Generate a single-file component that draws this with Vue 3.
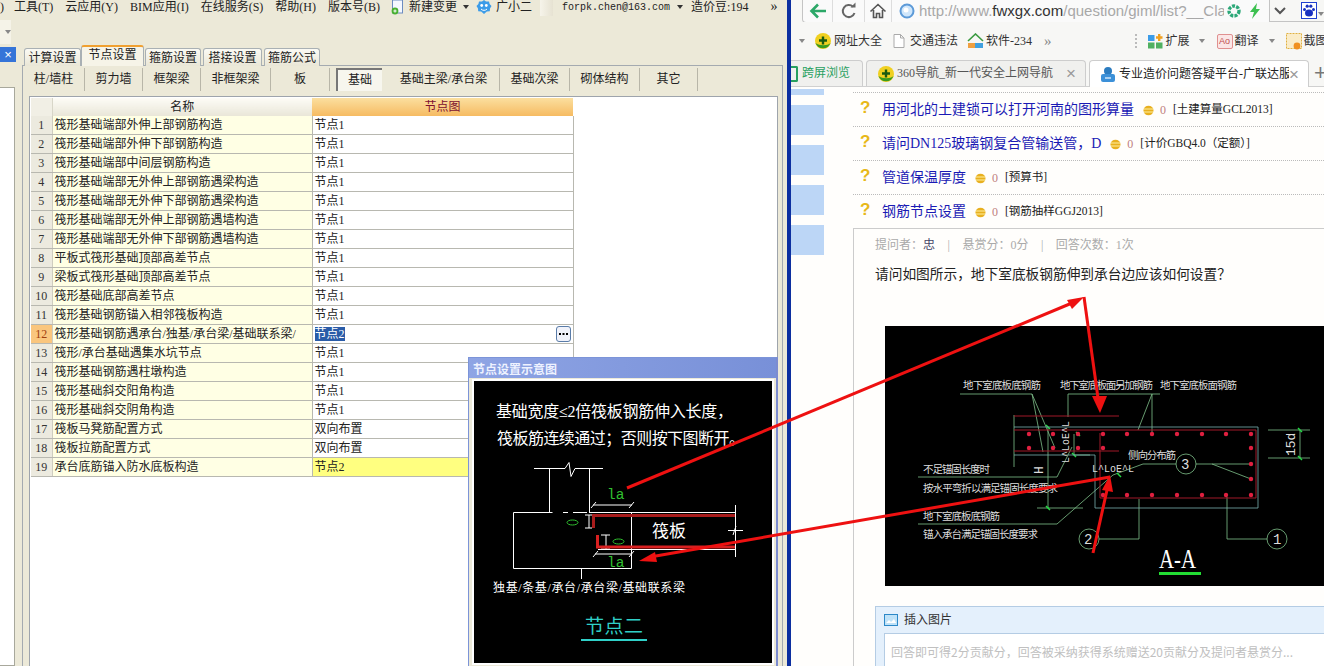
<template>
  <div class="desk">
    <section class="app">
      <header class="menu">
        <span class="menu-cut">)</span>
        <span v-for="m in menus" :key="m" class="menu-item">{{ m }}</span>
        <svg class="mi-doc" width="15" height="16" viewBox="0 0 15 16">
          <rect x="1.5" y="1" width="10" height="13" fill="#f4f8ff" stroke="#6c8cc0" />
          <circle cx="4" cy="12" r="3.4" fill="#48b030" />
          <path d="M2.4 12h3.2M4 10.4v3.2" stroke="#fff" />
        </svg>
        <span class="mi-change">新建变更</span>
        <span class="caret mi-caret1"></span>
        <svg class="mi-face" width="16" height="16" viewBox="0 0 16 16">
          <path d="M8 1l2 1.6 3-.2.6 2.6 1.9 2-1.5 2.4-.2 2.8-3 .4L8 15l-2.800-2.400-3-.4-.2-2.800L.5 7l1.900-2 .6-2.600 3 .2z" fill="#3c9ce8" />
          <circle cx="5.700" cy="6.500" r="1.400" fill="#fff" />
          <circle cx="10.300" cy="6.500" r="1.400" fill="#fff" />
          <path d="M5 10c1.500 1.800 4.500 1.800 6 0" stroke="#fff" fill="none" />
        </svg>
        <span class="mi-name">广小二</span>
        <span class="mi-fade"></span>
        <span class="mi-mail">forpk.chen@163.com</span>
        <span class="caret mi-caret2"></span>
        <span class="mi-bean">造价豆:194</span>
        <span class="mi-more">»</span>
      </header>

      <div class="app-body">
        <aside class="side">
          <div class="side-combo"><span class="caret caret-grey"></span></div>
          <div class="side-close">×</div>
          <div class="side-list"></div>
        </aside>

        <main class="work">
          <nav class="tabs">
            <span
              v-for="t in topTabs"
              :key="t.label"
              class="tab"
              :class="{ 'tab-on': t.on }"
              :style="{ width: t.w + 'px' }"
            >{{ t.label }}</span>
          </nav>

          <div class="panel">
            <div class="subtabs">
              <span
                v-for="s in subTabs"
                :key="s.label"
                class="subtab"
                :class="{ 'subtab-on': s.on }"
                :style="{ width: s.w + 'px' }"
              >{{ s.label }}</span>
            </div>

            <div class="grid-box">
              <table class="grid">
                <colgroup>
                  <col class="c-num" />
                  <col class="c-name" />
                  <col class="c-node" />
                </colgroup>
                <thead>
                  <tr>
                    <th class="th-blank"></th>
                    <th class="th-name">名称</th>
                    <th class="th-node">节点图</th>
                  </tr>
                </thead>
                <tbody>
                  <tr v-for="(r, i) in rows" :key="i">
                    <td class="num" :class="{ 'num-on': i === 11 }">{{ i + 1 }}</td>
                    <td class="name">{{ r[0] }}</td>
                    <td class="node" :class="{ 'node-flag': i === 18 }">
                      <span :class="{ 'node-sel': i === 11 }">{{ r[1] }}</span>
                      <span v-if="i === 11" class="dots">
                        <svg width="9" height="3" viewBox="0 0 9 3"><path d="M0 0h2v2H0zM3.500 0h2v2h-2zM7 0h2v2H7z" fill="#000" /></svg>
                      </span>
                    </td>
                  </tr>
                </tbody>
              </table>
            </div>
          </div>
        </main>
      </div>
    </section>

    <div class="divider"></div>

    <section class="browser">
      <div class="toolbar">
        <div class="nav-box">
          <span class="nav-btn nb-back">
            <svg width="20" height="18" viewBox="0 0 20 18"><path d="M18 9H4M10 2.500L3.500 9l6.500 6.500" fill="none" stroke="#2ca868" stroke-width="2.600" /></svg>
          </span>
          <span class="nav-btn nb-reload">
            <svg width="18" height="18" viewBox="0 0 18 18"><path d="M14.500 11A6 6 0 1 1 13 4.800" fill="none" stroke="#666" stroke-width="2" /><path d="M10.500 5.500h5v-5z" fill="#666" /></svg>
          </span>
          <span class="nav-btn nb-home">
            <svg width="18" height="18" viewBox="0 0 18 18"><path d="M1.500 9.500L9 2.500l7.500 7M4.500 8v7.500h3v-4h3v4h3V8" fill="none" stroke="#555" stroke-width="1.600" /></svg>
          </span>
          <div class="url">
            <svg width="16" height="16" viewBox="0 0 16 16"><circle cx="8" cy="8" r="6.500" fill="#cfe6fb" stroke="#5c9ad8" stroke-width="2" /><circle cx="7" cy="7" r="2.500" fill="#fff" /></svg>
            <span class="url-text"><span class="url-dim">http://www.</span><b>fwxgx.com</b><span class="url-dim">/question/giml/list?__Cla</span></span>
            <svg class="url-ok" width="16" height="16" viewBox="0 0 16 16"><circle cx="8" cy="8" r="5" fill="none" stroke="#2ca878" stroke-width="3.400" stroke-dasharray="3 1.200" /></svg>
            <svg class="url-bolt" width="14" height="18" viewBox="0 0 14 18"><path d="M9 1L2 10h4l-2 7 8-10H8z" fill="#3cc050" /></svg>
          </div>
        </div>
        <div class="tool-rest">
          <svg class="chev" width="14" height="10" viewBox="0 0 14 10"><path d="M2 2l5 5 5-5" fill="none" stroke="#555" stroke-width="2" /></svg>
          <svg class="paw" width="16" height="17" viewBox="0 0 16 17">
            <rect x=".5" y=".5" width="15" height="16" fill="#fff" stroke="#2040d0" />
            <ellipse cx="8" cy="11" rx="4" ry="3.500" fill="#1830c0" />
            <circle cx="3.500" cy="7.500" r="1.500" fill="#1830c0" /><circle cx="6.200" cy="4.200" r="1.600" fill="#1830c0" />
            <circle cx="9.800" cy="4.200" r="1.600" fill="#1830c0" /><circle cx="12.500" cy="7.500" r="1.500" fill="#1830c0" />
          </svg>
          <span class="caret caret-grey caret-sm"></span>
        </div>
      </div>

      <div class="bookmarks">
        <span class="caret caret-grey bm-caret"></span>
        <svg class="ico-360" width="18" height="18" viewBox="0 0 18 18"><circle cx="9" cy="9" r="8" fill="#f0d020" /><path d="M1.500 11a8 8 0 0 0 15 0c-3 3-11 3-15 0z" fill="#3a9a20" /><path d="M5 8.500h8M9 4.500v8" stroke="#1a5a10" stroke-width="2.400" /></svg>
        <span class="bm bm-a">网址大全</span>
        <svg class="bm-doc" width="12" height="14" viewBox="0 0 12 14"><path d="M1 .5h6.500L11 4v9.500H1z M7.500 .5V4H11" fill="#fff" stroke="#aaa" /></svg>
        <span class="bm bm-b">交通违法</span>
        <svg class="bm-2345" width="17" height="16" viewBox="0 0 17 16"><path d="M1 8l7.500-7L16 8" fill="none" stroke="#3a9a40" stroke-width="1.600" /><rect x="1" y="10" width="15" height="5" fill="#f0a040" /><rect x="8" y="10" width="8" height="5" fill="#40a0e0" /></svg>
        <span class="bm bm-c">软件-234</span>
        <span class="bm-more">»</span>
        <span class="bm-grip"></span>
        <svg class="bm-ext" width="15" height="15" viewBox="0 0 15 15"><rect x="0" y="1" width="6.500" height="6" fill="#3c9ce8" /><rect x="0" y="8.500" width="6.500" height="6" fill="#50b060" /><rect x="8" y="8.500" width="6.500" height="6" fill="#50b060" /><path d="M8 3.500h6.500M11.200 0v7" stroke="#f0a020" stroke-width="2.400" /></svg>
        <span class="bm bm-d">扩展</span>
        <span class="caret caret-grey bm-caret2"></span>
        <span class="bm-ao">Ao</span>
        <span class="bm bm-e">翻译</span>
        <span class="caret caret-grey bm-caret3"></span>
        <svg class="bm-shot" width="17" height="17" viewBox="0 0 17 17"><rect x=".5" y=".5" width="15" height="15" fill="#faecc8" stroke="#e0b040" stroke-dasharray="2 1" /><circle cx="11" cy="13" r="3.400" fill="#f09020" /></svg>
        <span class="bm bm-f">截图</span>
      </div>

      <div class="strip">
        <div class="b-tab b-tab-side">
          <span class="side-box"></span>
          <span class="side-label">跨屏浏览</span>
        </div>
        <div class="b-tab b-tab-mid">
          <svg width="18" height="18" viewBox="0 0 18 18"><circle cx="9" cy="9" r="8" fill="#f0d020" /><path d="M1.500 11a8 8 0 0 0 15 0c-3 3-11 3-15 0z" fill="#3a9a20" /><path d="M5 8.500h8M9 4.500v8" stroke="#1a5a10" stroke-width="2.400" /></svg>
          <span class="b-title">360导航_新一代安全上网导航</span>
          <span class="b-x">×</span>
        </div>
        <div class="b-tab b-tab-on">
          <svg width="16" height="17" viewBox="0 0 16 17"><circle cx="8" cy="5" r="4" fill="#2c7cc0" /><rect x="1" y="8" width="14" height="8" rx="2" fill="#3c90d8" /><path d="M5 12h6" stroke="#cfe6fb" stroke-width="1.500" /></svg>
          <span class="b-title b-title-on">专业造价问题答疑平台-广联达服</span>
          <span class="b-x b-x-on">×</span>
        </div>
        <span class="b-plus">+</span>
      </div>

      <div class="content">
        <div class="blocks">
          <span class="block block-cut"></span>
          <span v-for="n in 4" :key="n" class="block"></span>
        </div>
        <div class="content-main">
          <div v-for="q in questions" :key="q.title" class="q-row">
            <span class="q-mark">?</span>
            <a class="q-title">{{ q.title }}</a>
            <svg class="coin" width="11" height="11" viewBox="0 0 11 11"><ellipse cx="5.500" cy="5.500" rx="5" ry="4.800" fill="#e8b020" /><path d="M1 4h9M1 7h9" stroke="#fff0a0" /></svg>
            <span class="q-zero">0</span>
            <span class="q-cat">{{ q.cat }}</span>
          </div>

          <div class="q-panel">
            <div class="q-meta">
              <span>提问者：<em>忠</em></span><i>|</i><span>悬赏分：0分</span><i>|</i><span>回答次数：1次</span>
            </div>
            <p class="q-text">请问如图所示，地下室底板钢筋伸到承台边应该如何设置？</p>

            <svg class="cad" width="439" height="260" viewBox="885 326 439 260">
              <rect x="885" y="326" width="439" height="260" fill="#000" />
              <g fill="none" stroke="#7fc08a" stroke-width=".8">
                <path d="M960 394h72M1032 394l11 58M1032 394l23 54M1068 417v-23h72M1152 394l-14 36M1152 394v39M1160 394h-20" />
                <path d="M918 477h139l15-30M918 524h139l56-49M1176 464h-33l-30 11M1196 464h16l39 15M1212 464h39" />
                <path d="M1099 539h40v-40M1267 539h-40v-42M1268 430h42M1268 458h42M1300 430v28" />
                <path d="M1014 415v52M1048 427v81M1037 508h46M1074 434v21M1074 455h16" />
                <circle cx="1186" cy="464" r="10" /><circle cx="1089" cy="539" r="10" /><circle cx="1277" cy="539" r="10" />
              </g>
              <g stroke="#22dd44" stroke-width="1.500">
                <path v-for="t in cadTicks" :key="t[0] + '-' + t[1]" :d="`M${t[0] - 2} ${t[1] - 2}l4 4`" />
              </g>
              <path d="M1014 427h244v81h-163v-53h-81" fill="none" stroke="#7ab0b0" stroke-width=".8" />
              <g fill="none" stroke="#a01828" stroke-width="1">
                <path d="M1014 416h105M1014 430h242v68h-156v-65M1014 451h105" />
              </g>
              <g fill="#e02040">
                <circle v-for="d in cadDots" :key="d[0] + '-' + d[1]" :cx="d[0]" :cy="d[1]" r="2.200" />
              </g>
              <g class="cad-label">
                <text x="963" y="389" textLength="78">地下室底板底钢筋</text>
                <text x="1060" y="389" textLength="93">地下室底板面另加钢筋</text>
                <text x="1160" y="389" textLength="77">地下室底板面钢筋</text>
                <text x="1128" y="459" textLength="48">侧向分布筋</text>
                <text x="923" y="473" textLength="67">不足锚固长度时</text>
                <text x="923" y="492" textLength="135">按水平弯折以满足锚固长度要求</text>
                <text x="923" y="520" textLength="77">地下室底板底钢筋</text>
                <text x="923" y="538" textLength="115">锚入承台满足锚固长度要求</text>
              </g>
              <g class="cad-latin">
                <text x="1181" y="469" font-size="14">3</text>
                <text x="1084" y="544" font-size="14">2</text>
                <text x="1273" y="544" font-size="14">1</text>
                <text x="1092" y="472" font-size="10">L^LoE^L</text>
                <text transform="translate(1069 463) rotate(-90)" font-size="10">L^LoE^L</text>
                <text transform="translate(1043 474) rotate(-90)" font-size="13">H</text>
                <text transform="translate(1295 456) rotate(-90)" font-size="13">15d</text>
              </g>
              <text class="cad-title" x="1159" y="568" textLength="37" lengthAdjust="spacingAndGlyphs">A-A</text>
              <rect x="1159" y="572" width="42" height="3" fill="#22dd33" />
            </svg>

            <div class="answer">
              <div class="answer-head">
                <svg width="14" height="12" viewBox="0 0 14 12"><rect x=".5" y=".5" width="13" height="11" fill="#bfe2f8" stroke="#2c88c8" /><path d="M2 9l3-3 2 2 3-3 2 4z" fill="#fff" /></svg>
                <span>插入图片</span>
              </div>
              <div class="answer-box">回答即可得2分贡献分，回答被采纳获得系统赠送20贡献分及提问者悬赏分...</div>
            </div>
          </div>
        </div>
      </div>
    </section>

    <div class="popup">
      <div class="popup-title">节点设置示意图</div>
      <svg class="popup-draw" width="298" height="282" viewBox="474 381 298 282">
        <rect x="474" y="381" width="298" height="282" fill="#000" />
        <g class="draw-text">
          <text x="496" y="417" font-size="16" textLength="237">基础宽度≤2倍筏板钢筋伸入长度，</text>
          <text x="497" y="444" font-size="16" textLength="248">筏板筋连续通过；否则按下图断开。</text>
          <text x="652" y="537" font-size="17">筏板</text>
          <text x="493" y="592" font-size="12" textLength="192">独基/条基/承台/承台梁/基础联系梁</text>
        </g>
        <g fill="none" stroke="#fff" stroke-width="1">
          <path d="M534 468.500h31l4-6 2 14 4-8h28M549.500 468.500v44M589.500 468.500v44" />
          <path d="M513.500 512.500h39M563 512.500h5M573 512.500h14M589 512.500h146M513.500 512.500v56h118v-56M598 549.500h137M735.500 505v52" />
          <path d="M728 530.500h15M736 526l-3 9M593 505h39M595 554h37M581.500 568v11" />
          <path d="M591 508l5-6M629 508l5-6M593 557l5-6M629 557l5-6" />
          <path d="M592 515h-7M592 528h-7M589 515v13M601 535h9M601 549h9M606 535v14" />
        </g>
        <path d="M593.500 528v-12.500H735" fill="none" stroke="#a81c1c" stroke-width="3" />
        <path d="M597.500 535v12H735" fill="none" stroke="#d82020" stroke-width="3" />
        <ellipse cx="572.500" cy="522.500" rx="5.500" ry="2.500" fill="none" stroke="#30c030" />
        <ellipse cx="618.500" cy="541.500" rx="5.500" ry="2.500" fill="none" stroke="#30c030" />
        <text class="draw-la" x="607" y="499">la</text>
        <text class="draw-la" x="607" y="567">la</text>
        <text class="draw-node" x="585" y="633" textLength="58">节点二</text>
        <rect x="581" y="639" width="66" height="2" fill="#30d0c8" />
      </svg>
    </div>

    <svg class="arrows" width="1324" height="666" viewBox="0 0 1324 666">
      <g fill="none" stroke="#ee1111" stroke-width="3">
        <path d="M627 488L1072 303" />
        <path d="M1084 297L1098 398" />
        <path d="M1110 477L650 557" />
        <path d="M1093 553L1107 490" />
      </g>
      <g fill="#ee1111">
        <path d="M1084 297L1067 300L1072 309z" />
        <path d="M1100 413L1092 396L1107 396z" />
        <path d="M639 561L655 552L657 562z" />
        <path d="M1110 475L1102 490L1113 492z" />
      </g>
    </svg>
  </div>
</template>

<script setup>
const menus = ['工具(T)', '云应用(Y)', 'BIM应用(I)', '在线服务(S)', '帮助(H)', '版本号(B)']

const topTabs = [
  { label: '计算设置', w: 57 },
  { label: '节点设置', w: 63, on: true },
  { label: '箍筋设置', w: 56 },
  { label: '搭接设置', w: 59 },
  { label: '箍筋公式', w: 56 },
]

const subTabs = [
  { label: '柱/墙柱', w: 62 },
  { label: '剪力墙', w: 58 },
  { label: '框架梁', w: 58 },
  { label: '非框架梁', w: 70 },
  { label: '板', w: 59 },
  { label: '基础', w: 58, on: true },
  { label: '基础主梁/承台梁', w: 112 },
  { label: '基础次梁', w: 70 },
  { label: '砌体结构', w: 70 },
  { label: '其它', w: 58 },
]

const rows = [
  ['筏形基础端部外伸上部钢筋构造', '节点1'],
  ['筏形基础端部外伸下部钢筋构造', '节点1'],
  ['筏形基础端部中间层钢筋构造', '节点1'],
  ['筏形基础端部无外伸上部钢筋遇梁构造', '节点1'],
  ['筏形基础端部无外伸下部钢筋遇梁构造', '节点1'],
  ['筏形基础端部无外伸上部钢筋遇墙构造', '节点1'],
  ['筏形基础端部无外伸下部钢筋遇墙构造', '节点1'],
  ['平板式筏形基础顶部高差节点', '节点1'],
  ['梁板式筏形基础顶部高差节点', '节点1'],
  ['筏形基础底部高差节点', '节点1'],
  ['筏形基础钢筋锚入相邻筏板构造', '节点1'],
  ['筏形基础钢筋遇承台/独基/承台梁/基础联系梁/', '节点2'],
  ['筏形/承台基础遇集水坑节点', '节点1'],
  ['筏形基础钢筋遇柱墩构造', '节点1'],
  ['筏形基础斜交阳角构造', '节点1'],
  ['筏形基础斜交阴角构造', '节点1'],
  ['筏板马凳筋配置方式', '双向布置'],
  ['筏板拉筋配置方式', '双向布置'],
  ['承台底筋锚入防水底板构造', '节点2'],
]

const questions = [
  { title: '用河北的土建锁可以打开河南的图形算量', cat: '[土建算量GCL2013]' },
  { title: '请问DN125玻璃钢复合管输送管，D', cat: '[计价GBQ4.0（定额）]' },
  { title: '管道保温厚度', cat: '[预算书]' },
  { title: '钢筋节点设置', cat: '[钢筋抽样GGJ2013]' },
]

const topXs = [1029, 1053, 1078, 1103, 1127, 1152, 1177, 1202, 1226, 1251]
const cadDots = [
  ...topXs.map((x) => [x, 434]),
  ...[1029, 1053, 1078, 1103].map((x) => [x, 448]),
  [1251, 448],
  [1251, 464],
  [1251, 479],
  ...[1103, 1127, 1152, 1177, 1202, 1226, 1251].map((x) => [x, 495]),
]
const cadTicks = [
  [1048, 427],
  [1078, 434],
  [1074, 455],
  [1048, 508],
  [1119, 475],
  [1300, 430],
  [1300, 458],
]
</script>

<style>
html, body {
  margin: 0;
  background: #fff;
}
</style>

<style scoped>
.desk {
  position: relative;
  display: flex;
  width: 1324px;
  height: 666px;
  overflow: hidden;
  font: 12px/1.2 "Liberation Serif", "Noto Sans CJK SC", serif;
  color: #222;
}
.caret {
  display: inline-block;
  flex: none;
  width: 0;
  height: 0;
  border: 3.500px solid transparent;
  border-top: 4px solid #333;
  border-bottom: 0;
}
.caret-grey {
  border-top-color: #888;
}

/* left application */
.app {
  width: 787px;
  flex: none;
  display: flex;
  flex-direction: column;
  background: #ece9d8;
}
.menu {
  display: flex;
  align-items: center;
  height: 14px;
  padding: 0 0 6px;
  white-space: nowrap;
}
.menu-cut {
  width: 14px;
  flex: none;
}
.menu-item {
  margin-right: 12px;
}
.mi-doc {
  margin-left: -1px;
}
.mi-change {
  margin-left: 3px;
}
.mi-caret1 {
  margin-left: 6px;
}
.mi-face {
  margin-left: 7px;
}
.mi-name {
  margin-left: 4px;
}
.mi-fade {
  width: 13px;
  height: 18px;
  margin-left: 8px;
  background: linear-gradient(90deg, #f6f4ea, #e6e2d2);
}
.mi-mail {
  margin-left: 9px;
  font: 10px "Liberation Mono", monospace;
}
.mi-caret2 {
  margin-left: 7px;
}
.mi-bean {
  margin-left: 8px;
}
.mi-more {
  margin-left: 22px;
  font-size: 14px;
  line-height: 10px;
}
.app-body {
  flex: 1;
  display: flex;
  min-height: 0;
}
.side {
  width: 22px;
  flex: none;
  display: flex;
  flex-direction: column;
}
.side-combo {
  width: 11px;
  height: 24px;
  background: #f5f3e8;
  display: flex;
  align-items: center;
  justify-content: flex-end;
}
.side-close {
  width: 16px;
  height: 15px;
  margin-top: 3px;
  background: #3574d8;
  color: #fff;
  font: 13px/15px "Liberation Sans", sans-serif;
  text-align: center;
}
.side-list {
  flex: 1;
  width: 14px;
  margin-top: 25px;
  background: #fff;
  border: 1px solid #a8a89c;
  border-left: 0;
}
.work {
  flex: 1;
  min-width: 0;
  display: flex;
  flex-direction: column;
  padding: 26px 4px 0 0;
}
.tabs {
  display: flex;
  align-items: flex-end;
  height: 20px;
  margin-left: 2px;
  gap: 2px;
  position: relative;
  z-index: 1;
  margin-bottom: -1px;
}
.tab {
  box-sizing: border-box;
  height: 18px;
  line-height: 18px;
  text-align: center;
  background: linear-gradient(#fbfaf4, #e9e6d6);
  border: 1px solid #a9b0b4;
  border-bottom: 0;
  border-radius: 3px 3px 0 0;
  font-size: 12px;
}
.tab-on {
  height: 21px;
  margin: 0 -1px 0 -2px;
  background: #f6f4e8;
  border-top: 2px solid #f0a030;
  line-height: 17px;
}
.panel {
  flex: 1;
  min-height: 0;
  border: 1px solid #a4aab0;
  border-bottom: 0;
  display: flex;
  flex-direction: column;
  background: #ece9d8;
}
.subtabs {
  display: flex;
  height: 23px;
  margin-top: 2px;
}
.subtab {
  box-sizing: border-box;
  border-right: 1px solid #b8b6a8;
  line-height: 22px;
  text-align: center;
  font-size: 12px;
}
.subtab-on {
  border-right: 0;
  border-top: 2px solid #777;
  border-left: 2px solid #777;
  background: #f7f6ee;
  margin: 0 6px;
  width: 46px !important;
  line-height: 21px;
}
.grid-box {
  flex: 1;
  margin: 5px 4px 0 6px;
  background: #fff;
  border: 1px solid #9ea4ac;
  border-bottom: 0;
  padding: 1px 0 0 1px;
}
.grid {
  table-layout: fixed;
  width: 542px;
  border-collapse: collapse;
  font-size: 12px;
}
.c-num {
  width: 21px;
}
.c-name {
  width: 260px;
}
.c-node {
  width: 261px;
}
.grid th {
  height: 18px;
  padding: 0;
  font-weight: 400;
  line-height: 18px;
}
.th-blank {
  background: #f1efe5;
}
.th-name {
  background: linear-gradient(#fdfcf6, #e9e6d8);
  border-left: 1px solid #d8d6c8;
}
.th-node {
  background: linear-gradient(#fbdf9f, #f6bb62);
  color: #801030;
}
.grid td {
  height: 18px;
  padding: 0;
  border-bottom: 1px solid #b8b8b0;
  white-space: nowrap;
  overflow: hidden;
}
.num {
  background: #eceadf;
  text-align: center;
  color: #333;
  border-right: 1px solid #cfcdc0;
}
.num-on {
  background: #fac67e;
  color: #a04010;
}
.name {
  background: #ffffe4;
  padding-left: 2px !important;
  border-right: 1px solid #b8b8b0;
}
.node {
  padding-left: 2px !important;
  position: relative;
  border-right: 1px solid #b8b8b0;
}
.node-flag {
  background: #ffff80;
}
.node-sel {
  background: #2a5ca8;
  color: #fff;
}
.dots {
  position: absolute;
  right: 2px;
  top: 1px;
  width: 13px;
  height: 14px;
  border: 1px solid #5a7ca8;
  border-radius: 3px;
  background: #f0f2fa;
  display: flex;
  align-items: center;
  justify-content: center;
}

.divider {
  width: 4px;
  flex: none;
  background: #0c2fa0;
}

/* right browser */
.browser {
  flex: 1;
  min-width: 0;
  display: flex;
  flex-direction: column;
}
.toolbar {
  display: flex;
  align-items: center;
  height: 22px;
  background: #f7f7f5;
}
.nav-box {
  display: flex;
  align-items: center;
  width: 468px;
  flex: none;
  height: 23px;
  box-sizing: border-box;
  margin-left: 11px;
  border: 1px solid #c4c4c4;
  border-top: 0;
  border-radius: 0 0 0 4px;
  background: #fafafa;
}
.nav-btn {
  height: 100%;
  flex: none;
  box-sizing: border-box;
  display: flex;
  align-items: center;
  justify-content: center;
  border-right: 1px solid #ddd;
}
.nb-back {
  width: 30px;
}
.nb-reload {
  width: 32px;
}
.nb-home {
  width: 27px;
  margin-right: 7px;
}
.url {
  flex: 1;
  display: flex;
  align-items: center;
  min-width: 0;
  height: 100%;
  overflow: hidden;
}
.url-text {
  margin-left: 4px;
  width: 305px;
  flex: none;
  overflow: hidden;
  white-space: nowrap;
  font: 15px "Liberation Sans", sans-serif;
}
.url-text b {
  font-weight: 400;
  color: #333;
}
.url-dim {
  color: #a8a8a8;
}
.url-ok {
  margin-left: 2px;
  flex: none;
}
.url-bolt {
  margin-left: 6px;
  flex: none;
}
.tool-rest {
  flex: 1;
  height: 22px;
  box-sizing: border-box;
  border-bottom: 1px solid #c4c4c4;
  display: flex;
  align-items: center;
}
.chev {
  margin-left: 3px;
}
.paw {
  margin-left: 14px;
}
.caret-sm {
  margin: 6px 0 0 1px;
}
.bookmarks {
  display: flex;
  align-items: center;
  height: 38px;
  background: #f7f7f5;
  white-space: nowrap;
  overflow: hidden;
  font-size: 12px;
  color: #333;
}
.bm {
  flex: none;
}
.bm-caret {
  margin-left: 7.500px;
}
.ico-360 {
  margin-left: 9.500px;
  flex: none;
}
.bm-a {
  margin-left: 2px;
}
.bm-doc {
  margin-left: 11px;
  flex: none;
}
.bm-b {
  margin-left: 5px;
}
.bm-2345 {
  margin-left: 9px;
  flex: none;
}
.bm-c {
  margin-left: 2px;
}
.bm-more {
  margin-left: 12px;
  font-size: 15px;
  color: #888;
}
.bm-grip {
  width: 2px;
  height: 14px;
  margin-left: 83px;
  border-left: 2px dotted #bbb;
}
.bm-ext {
  margin-left: 11px;
  flex: none;
}
.bm-d {
  margin-left: 3px;
}
.bm-caret2 {
  margin-left: 9.500px;
}
.bm-ao {
  width: 16px;
  height: 15px;
  margin-left: 11.500px;
  flex: none;
  box-sizing: border-box;
  border: 1px solid #e09090;
  border-radius: 2px;
  background: #fbe6e6;
  color: #c05050;
  font: 9px/13px "Liberation Sans", sans-serif;
  text-align: center;
}
.bm-e {
  margin-left: 2px;
}
.bm-caret3 {
  margin-left: 10.500px;
}
.bm-shot {
  margin-left: 10.500px;
  flex: none;
}
.bm-f {
  margin-left: 1px;
}
.strip {
  display: flex;
  align-items: flex-end;
  height: 27px;
  background: #f7f7f5;
  border-bottom: 1px solid #d0d0d0;
  box-sizing: border-box;
  white-space: nowrap;
}
.b-tab {
  height: 26px;
  flex: none;
  box-sizing: border-box;
  display: flex;
  align-items: center;
  border: 1px solid #cdcdcd;
  border-bottom: 0;
  border-radius: 4px 4px 0 0;
  background: #f0f0ee;
}
.b-tab-side {
  width: 72px;
  border-left: 0;
  border-radius: 0 4px 0 0;
}
.side-box {
  width: 5px;
  height: 12px;
  border: 2px solid #28a060;
  border-left: 0;
  border-radius: 0 2px 2px 0;
}
.side-label {
  margin-left: 4px;
  color: #28a060;
  font-size: 12px;
}
.b-tab-mid {
  width: 220px;
  margin-left: 3px;
  padding-left: 10px;
}
.b-title {
  margin-left: 2px;
  color: #555;
  font-size: 12px;
}
.b-x {
  margin-left: 13px;
  color: #999;
  font: 17px/1 "Liberation Sans", sans-serif;
}
.b-tab-on {
  width: 220px;
  height: 27px;
  margin: 0 0 -1px 3px;
  padding-left: 10px;
  background: #fff;
  position: relative;
}
.b-title-on {
  margin-left: 3px;
  color: #222;
  overflow: hidden;
  width: 170px;
  flex: none;
}
.b-x-on {
  margin-left: 0;
}
.b-plus {
  margin-left: 5px;
  color: #777;
  font: 22px/26px "Liberation Sans", sans-serif;
}
.content {
  flex: 1;
  min-height: 0;
  display: flex;
  background: #fffefc;
}
.blocks {
  width: 33px;
  flex: none;
  display: flex;
  flex-direction: column;
  gap: 10px;
  padding-top: 2px;
}
.block {
  height: 30px;
  background: #bcd6f6;
}
.block-cut {
  height: 6px;
}
.content-main {
  flex: 1;
  min-width: 0;
  margin-left: 29px;
  padding-top: 5px;
}
.q-row {
  display: flex;
  align-items: center;
  height: 34px;
  box-sizing: border-box;
  border-top: 1px dotted #bbb;
  padding-top: 1px;
  white-space: nowrap;
}
.q-mark {
  width: 29px;
  padding: 0 0 6px 7px;
  box-sizing: border-box;
  color: #e8b818;
  font: 700 17px/1 "Liberation Sans", sans-serif;
}
.q-title {
  color: #1a1ab4;
  font-size: 14px;
}
.coin {
  margin-left: 9px;
}
.q-zero {
  margin-left: 6px;
  color: #c08080;
}
.q-cat {
  margin-left: 7px;
  font-size: 11.500px;
  color: #222;
}
.q-panel {
  height: 500px;
  border: 1px solid #ccc;
  border-width: 1px 0 0 1px;
  padding-left: 21px;
}
.q-meta {
  display: flex;
  align-items: center;
  height: 33px;
  color: #aaa;
  font-size: 12px;
  white-space: nowrap;
}
.q-meta em {
  font-style: normal;
  color: #446;
}
.q-meta i {
  font-style: normal;
  margin: 0 12.500px;
}
.q-text {
  margin: 0;
  height: 26px;
  line-height: 26px;
  font-size: 13.700px;
  color: #222;
  white-space: nowrap;
}
.cad {
  display: block;
  margin: 38px 0 0 10px;
}
.cad-label text {
  font-size: 10.500px;
  fill: #ddd;
}
.cad-latin text {
  fill: #ddd;
  font-family: "Liberation Mono", monospace;
}
.cad-title {
  fill: #fff;
  font: 28px "Liberation Serif", serif;
}
.answer {
  margin-top: 20px;
  border: 1px solid #b4cce4;
  border-width: 1px 0 0 1px;
  background: #e4f0fc;
  padding-left: 8px;
  height: 70px;
}
.answer-head {
  display: flex;
  align-items: center;
  gap: 6px;
  height: 26px;
  color: #333;
  font-size: 12px;
}
.answer-box {
  background: #fff;
  border: 1px solid #b4cce4;
  border-width: 1px 0 0 1px;
  padding: 9px 0 0 6px;
  height: 40px;
  color: #c0c0c0;
  font: 12px "Noto Sans CJK SC", sans-serif;
  white-space: nowrap;
}

/* floating preview window, over the grid */
.popup {
  position: absolute;
  left: 468px;
  top: 357px;
  width: 310px;
  height: 309px;
  box-sizing: border-box;
  background: #ece9d8;
  border: 1px solid #7c94d8;
  border-right: 2px solid #7c8cd0;
  border-bottom: 0;
}
.popup-title {
  height: 20px;
  padding-left: 4px;
  background: linear-gradient(90deg, #8ea4e4, #7890d8);
  color: #eef2ff;
  font-size: 12px;
  font-weight: 700;
  line-height: 24px;
}
.popup-draw {
  display: block;
  margin: 3px 0 0 5px;
  outline: 2px solid #fff;
}
.draw-text text {
  fill: #fff;
}
.draw-la {
  fill: #30c030;
  font: 14.500px "Liberation Mono", monospace;
}
.draw-node {
  fill: #30d0c8;
  font-size: 19px;
}
.arrows {
  position: absolute;
  left: 0;
  top: 0;
  pointer-events: none;
}
</style>
